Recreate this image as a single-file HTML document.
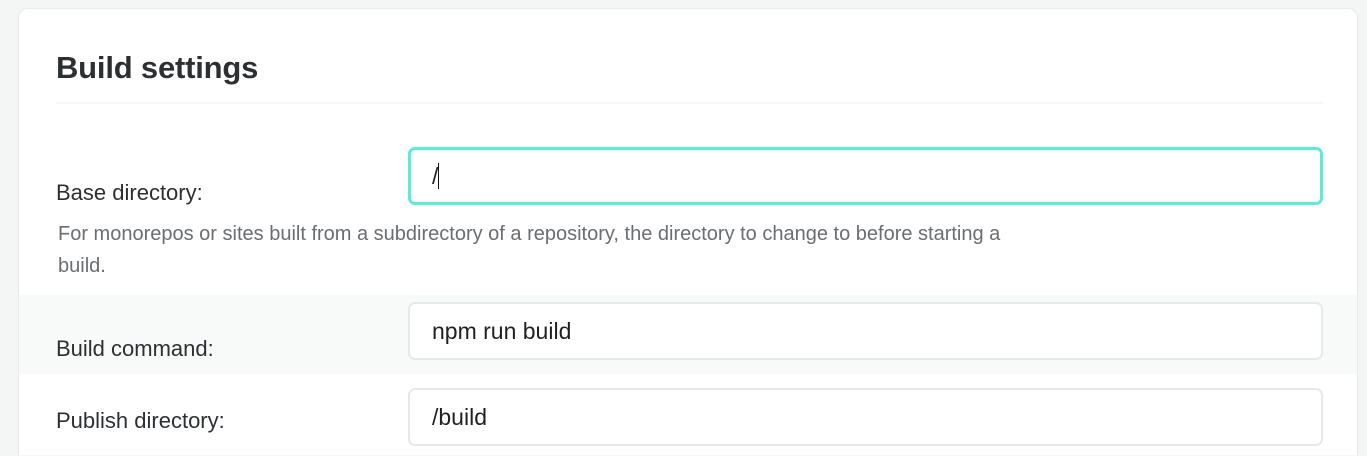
<!DOCTYPE html>
<html style="height:456px;overflow:hidden"><head><style>
body{margin:0;width:1367px;height:456px;background:#f4f5f5;font-family:"Liberation Sans",sans-serif;overflow:hidden;position:relative}
.card{position:absolute;left:18px;top:8px;width:1338px;height:446px;background:#fff;border:1px solid #e8e9ea;border-bottom:none;border-radius:10px 10px 0 0}
h1{position:absolute;left:37px;top:41px;margin:0;font-size:31px;font-weight:bold;color:#2d3033;letter-spacing:-0.2px}
.hr{position:absolute;left:37px;top:93px;width:1267px;height:2px;background:#f5f6f6}
.lbl{position:absolute;left:37px;font-size:22px;color:#2d3033}
.inp{position:absolute;left:389px;width:911px;height:54px;border:2px solid #e6e9eb;border-radius:7px;background:#fff;font-size:23px;color:#1e2022;box-sizing:content-box}
.inp span{position:absolute;left:22px;top:14px}
.band{position:absolute;left:0;top:286px;width:1338px;height:79px;background:#f8f9f9}
.help{position:absolute;left:39px;top:209px;width:980px;font-size:20px;line-height:32px;color:#6a6e72}
</style></head><body>
<div class="card">
<h1>Build settings</h1>
<div class="hr"></div>
<div class="lbl" style="top:171px">Base directory:</div>
<div class="inp" style="top:138px;border:3px solid #5eeadb;height:52px;width:909px"><span style="top:13px;left:21px">/<span style="position:static;display:inline-block;width:1px;height:26px;background:#111;vertical-align:-5px"></span></span></div>
<div class="help">For monorepos or sites built from a subdirectory of a repository, the directory to change to before starting a build.</div>
<div class="band"></div>
<div class="lbl" style="top:327px">Build command:</div>
<div class="inp" style="top:293px"><span>npm run build</span></div>
<div class="lbl" style="top:399px">Publish directory:</div>
<div class="inp" style="top:379px"><span>/build</span></div>
</div>
</body></html>
